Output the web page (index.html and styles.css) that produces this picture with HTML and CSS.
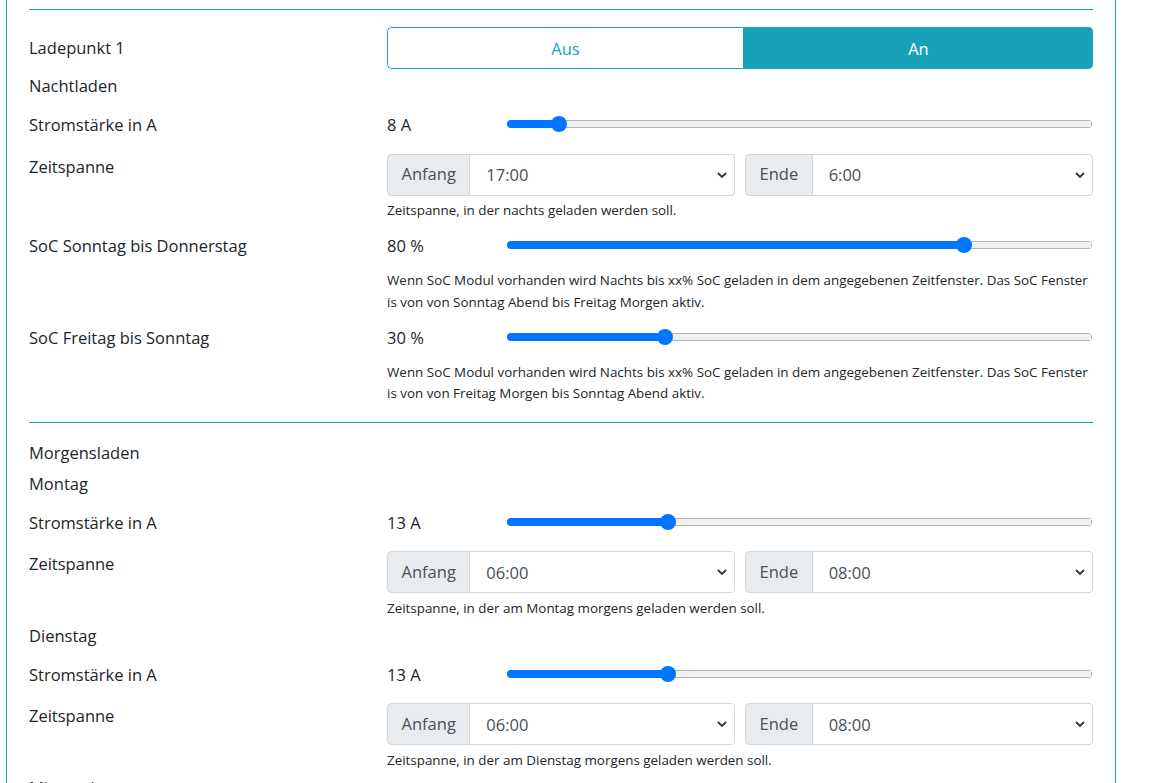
FILE: index.html
```html
<!DOCTYPE html>
<html lang="de">
<head>
    <meta charset="UTF-8">
    <meta name="viewport" content="width=device-width, initial-scale=1.0">
    <title>Ladepunkt 1</title>
    <link rel="stylesheet" href="styles.css">
</head>
<body>
    <div class="card">
        <hr class="sep">
        <div class="row">
            <label class="lbl lbl-btn">Ladepunkt 1</label>
            <div class="toggle">
                <button class="tbtn">Aus</button>
                <button class="tbtn active">An</button>
            </div>
        </div>

        <div class="heading">Nachtladen</div>
        <div class="row">
            <label class="lbl lbl-pad">Stromstärke in A</label>
            <div>
                <div class="slider-line">
                    <span class="value">8 A</span>
                    <input class="range" type="range" min="6" max="32" value="8" style="--r: 0.0769">
                </div>
            </div>
        </div>
        <div class="row">
            <label class="lbl">Zeitspanne</label>
            <div>
                <div class="time-pair">
                    <div class="igroup">
                        <span class="addon">Anfang</span>
                        <select class="sel"><option>17:00</option></select>
                    </div>
                    <div class="igroup">
                        <span class="addon">Ende</span>
                        <select class="sel"><option>6:00</option></select>
                    </div>
                </div>
                <small class="help help-gap">Zeitspanne, in der nachts geladen werden soll.</small>
            </div>
        </div>
        <div class="row">
            <label class="lbl lbl-pad">SoC Sonntag bis Donnerstag</label>
            <div>
                <div class="slider-line">
                    <span class="value">80 %</span>
                    <input class="range" type="range" min="5" max="100" value="80" style="--r: 0.7895">
                </div>
                <small class="help">Wenn SoC Modul vorhanden wird Nachts bis xx% SoC geladen in dem angegebenen Zeitfenster. Das SoC Fenster is von von Sonntag Abend bis Freitag Morgen aktiv.</small>
            </div>
        </div>
        <div class="row">
            <label class="lbl lbl-pad">SoC Freitag bis Sonntag</label>
            <div>
                <div class="slider-line">
                    <span class="value">30 %</span>
                    <input class="range" type="range" min="5" max="100" value="30" style="--r: 0.2632">
                </div>
                <small class="help">Wenn SoC Modul vorhanden wird Nachts bis xx% SoC geladen in dem angegebenen Zeitfenster. Das SoC Fenster is von von Freitag Morgen bis Sonntag Abend aktiv.</small>
            </div>
        </div>

        <hr class="sep">
        <div class="heading">Morgensladen</div>

        <div class="heading">Montag</div>
        <div class="row">
            <label class="lbl lbl-pad">Stromstärke in A</label>
            <div>
                <div class="slider-line">
                    <span class="value">13 A</span>
                    <input class="range" type="range" min="6" max="32" value="13" style="--r: 0.2692">
                </div>
            </div>
        </div>
        <div class="row">
            <label class="lbl">Zeitspanne</label>
            <div>
                <div class="time-pair">
                    <div class="igroup">
                        <span class="addon">Anfang</span>
                        <select class="sel"><option>06:00</option></select>
                    </div>
                    <div class="igroup">
                        <span class="addon">Ende</span>
                        <select class="sel"><option>08:00</option></select>
                    </div>
                </div>
                <small class="help help-gap">Zeitspanne, in der am Montag morgens geladen werden soll.</small>
            </div>
        </div>

        <div class="heading">Dienstag</div>
        <div class="row">
            <label class="lbl lbl-pad">Stromstärke in A</label>
            <div>
                <div class="slider-line">
                    <span class="value">13 A</span>
                    <input class="range" type="range" min="6" max="32" value="13" style="--r: 0.2692">
                </div>
            </div>
        </div>
        <div class="row">
            <label class="lbl">Zeitspanne</label>
            <div>
                <div class="time-pair">
                    <div class="igroup">
                        <span class="addon">Anfang</span>
                        <select class="sel"><option>06:00</option></select>
                    </div>
                    <div class="igroup">
                        <span class="addon">Ende</span>
                        <select class="sel"><option>08:00</option></select>
                    </div>
                </div>
                <small class="help help-gap">Zeitspanne, in der am Dienstag morgens geladen werden soll.</small>
            </div>
        </div>

        <div class="heading">Mittwoch</div>
        <div class="row">
            <label class="lbl lbl-pad">Stromstärke in A</label>
            <div>
                <div class="slider-line">
                    <span class="value">13 A</span>
                    <input class="range" type="range" min="6" max="32" value="13" style="--r: 0.2692">
                </div>
            </div>
        </div>
        <div class="row">
            <label class="lbl">Zeitspanne</label>
            <div>
                <div class="time-pair">
                    <div class="igroup">
                        <span class="addon">Anfang</span>
                        <select class="sel"><option>06:00</option></select>
                    </div>
                    <div class="igroup">
                        <span class="addon">Ende</span>
                        <select class="sel"><option>08:00</option></select>
                    </div>
                </div>
                <small class="help help-gap">Zeitspanne, in der am Mittwoch morgens geladen werden soll.</small>
            </div>
        </div>
    </div>
</body>
</html>
```

FILE: styles.css
```css
body{
    margin: 0;
    font-family: "Open Sans", "Noto Sans", sans-serif;
    font-size: 16.5px;
    line-height: 26.4px;
    color: #212529;
    background-color: #fff;
}
.card{
    width: 1110px;
    box-sizing: border-box;
    margin: -12px 0 0 6px;
    padding: 0 22px 20px;
    border: 1px solid #17a2b8;
}
.sep{
    height: 0;
    margin: 17.6px 0;
    border: 0;
    border-top: 1px solid #17a2b8;
}
.card > .sep:first-child{
    margin-top: 20px;
    margin-bottom: 17px;
}
.row{
    display: grid;
    grid-template-columns: 348px 706px;
    column-gap: 10px;
    margin-bottom: 4.4px;
}
.heading{
    margin-bottom: 4.4px;
}
.lbl{
    display: block;
}
.lbl-btn{
    line-height: 42px;
}
.lbl-pad{
    padding-top: 7.6px;
}
.toggle{
    display: flex;
    height: 42px;
}
.tbtn{
    flex: 1 1 auto;
    padding: 0 13.2px;
    font-family: inherit;
    font-size: 16.5px;
    color: #17a2b8;
    background-color: #fff;
    border: 1px solid #17a2b8;
    border-radius: 4.4px 0 0 4.4px;
    cursor: pointer;
}
.tbtn.active{
    color: #fff;
    background-color: #17a2b8;
    border-radius: 0 4.4px 4.4px 0;
}
.slider-line{
    display: grid;
    grid-template-columns: 110px 585px;
    column-gap: 10px;
    height: 45px;
}
.value{
    padding-top: 7.6px;
}
.range{
    -webkit-appearance: none;
    appearance: none;
    display: block;
    width: 100%;
    height: 16px;
    margin: 12px 0 0;
    padding: 0;
    background: transparent;
}
.range::-webkit-slider-runnable-track{
    height: 8px;
    border-radius: 4px;
    background:
        linear-gradient(#0075ff, #0075ff) no-repeat 0 0 / calc(8px + (100% - 16px) * var(--r)) 100%,
        linear-gradient(#efefef, #efefef) no-repeat 1px 1px / calc(100% - 2px) calc(100% - 2px),
        #b2b2b2;
}
.range::-webkit-slider-thumb{
    -webkit-appearance: none;
    width: 16px;
    height: 16px;
    margin-top: -4px;
    border: 0;
    border-radius: 50%;
    background-color: #0075ff;
}
.range::-moz-range-track{
    height: 8px;
    border-radius: 4px;
    background: #efefef;
    border: 1px solid #b2b2b2;
}
.range::-moz-range-progress{
    height: 8px;
    border-radius: 4px;
    background: #0075ff;
}
.range::-moz-range-thumb{
    width: 16px;
    height: 16px;
    border: 0;
    border-radius: 50%;
    background: #0075ff;
}
.time-pair{
    display: grid;
    grid-template-columns: 348px 348px;
    column-gap: 10px;
}
.igroup{
    display: flex;
    height: 42px;
}
.addon{
    display: flex;
    align-items: center;
    padding: 0 13.5px;
    color: #495057;
    background-color: #e9ecef;
    border: 1px solid #ced4da;
    border-radius: 4.4px 0 0 4.4px;
}
.sel{
    -webkit-appearance: none;
    appearance: none;
    flex: 1;
    min-width: 0;
    height: 42px;
    padding: 0 30px 0 16px;
    font-family: inherit;
    font-size: 16.5px;
    color: #495057;
    border: 1px solid #ced4da;
    border-left: 0;
    border-radius: 0 4.4px 4.4px 0;
    background: #fff url("data:image/svg+xml,%3Csvg xmlns='http://www.w3.org/2000/svg' width='10' height='6' viewBox='0 0 10 6'%3E%3Cpath d='M1 1l4 4 4-4' fill='none' stroke='%23333' stroke-width='1.8'/%3E%3C/svg%3E") no-repeat right 7px center / 10px 6px;
}
.help{
    display: block;
    font-size: 13.4px;
    line-height: 21.1px;
}
.help-gap{
    margin-top: 4.4px;
}
```
